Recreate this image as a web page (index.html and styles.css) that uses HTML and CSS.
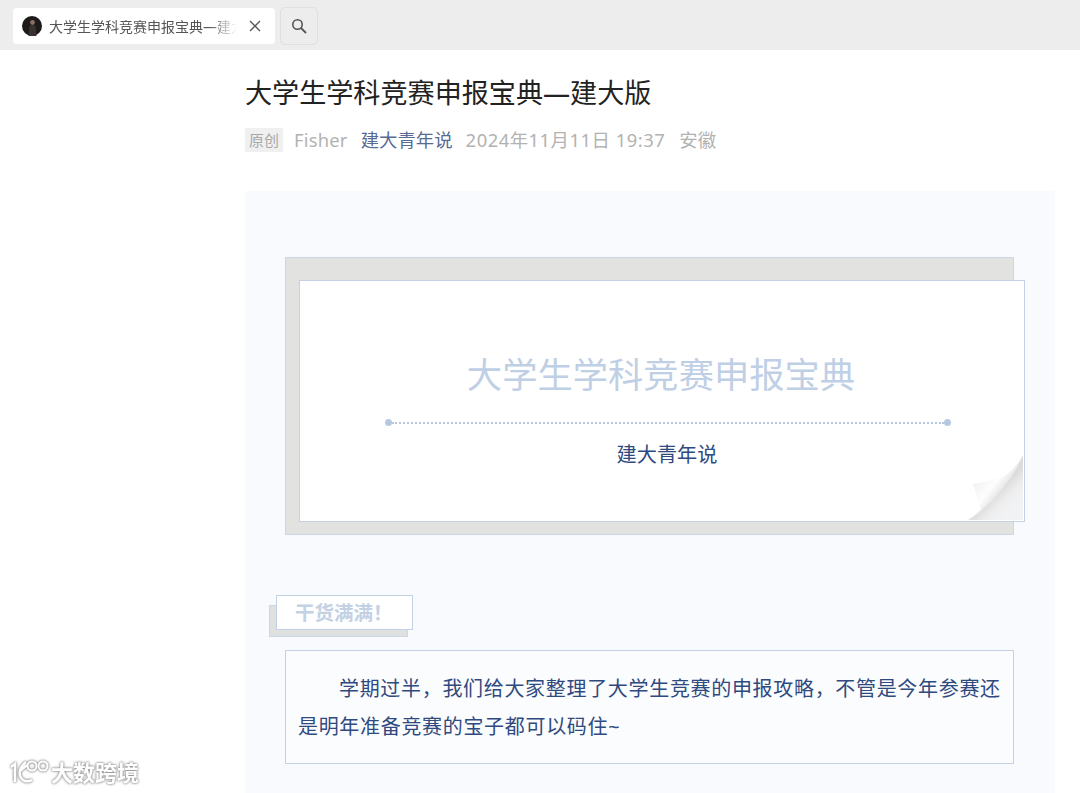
FILE: index.html
```html
<!DOCTYPE html>
<html lang="zh-CN">
    <head>
        <meta charset="UTF-8">
        <title>大学生学科竞赛申报宝典—建大版</title>
        <link rel="stylesheet" href="styles.css">
    </head>
    <body>
        <header class="tab-bar">
            <div class="tab">
                <svg class="tab-avatar" viewBox="0 0 20 20" width="20" height="20">
                    <circle cx="10" cy="10" r="10" fill="#1d1a1a"/>
                    <circle cx="10.5" cy="6.5" r="2.4" fill="#8a6f62"/>
                    <path d="M6.5 20 L7.5 10 Q10.5 8 13.5 10 L14.5 20 Z" fill="#3a3231"/>
                </svg>
                <span class="tab-title">大学生学科竞赛申报宝典—建大版</span>
                <svg class="tab-close" viewBox="0 0 12 12" width="12" height="12">
                    <path d="M1 1 L11 11 M11 1 L1 11" stroke="#555" stroke-width="1.3" fill="none"/>
                </svg>
            </div>
            <button class="search-btn">
                <svg viewBox="0 0 16 16" width="16" height="16">
                    <circle cx="6.5" cy="6.5" r="4.7" stroke="#555" stroke-width="1.6" fill="none"/>
                    <path d="M10 10 L15 15" stroke="#555" stroke-width="1.8" fill="none"/>
                </svg>
            </button>
        </header>

        <main class="article">
            <h1 class="article-title">大学生学科竞赛申报宝典—建大版</h1>
            <div class="meta">
                <span class="meta-tag">原创</span>
                <span class="meta-author">Fisher</span>
                <a class="meta-account" href="#">建大青年说</a>
                <span class="meta-date">2024年11月11日 19:37</span>
                <span class="meta-place">安徽</span>
            </div>

            <section class="content">
                <div class="cover-back">
                    <div class="cover">
                        <h2 class="cover-title">大学生学科竞赛申报宝典</h2>
                        <div class="cover-line">
                            <span class="cover-dot"></span>
                            <span class="cover-dots"></span>
                            <span class="cover-dot"></span>
                        </div>
                        <p class="cover-sub">建大青年说</p>
                        <svg class="cover-curl" viewBox="0 0 58 68" width="58" height="68">
                            <defs>
                                <linearGradient id="foldShade" x1="6" y1="28" x2="34" y2="50" gradientUnits="userSpaceOnUse">
                                    <stop offset="0" stop-color="#f1f1f1"/>
                                    <stop offset="0.5" stop-color="#fdfdfd"/>
                                    <stop offset="0.85" stop-color="#e2e2e2"/>
                                    <stop offset="1" stop-color="#c9c9c9"/>
                                </linearGradient>
                                <linearGradient id="cornerShade" x1="30" y1="38" x2="46" y2="54" gradientUnits="userSpaceOnUse">
                                    <stop offset="0" stop-color="#dcdcdc"/>
                                    <stop offset="0.5" stop-color="#eeeeef"/>
                                    <stop offset="1" stop-color="#f1f2f4"/>
                                </linearGradient>
                            </defs>
                            <path d="M57 0 L57 67 L0 67 Z" fill="#fff"/>
                            <path d="M56 1 L56 66 L1 66 Q38 40 56 1 Z" fill="url(#cornerShade)"/>
                            <path d="M56 1 Q48 15 36 23 Q22 27 6 30 L14 55 L1 67 Q38 40 56 1 Z" fill="url(#foldShade)"/>
                        </svg>
                    </div>
                </div>

                <div class="badge-wrap">
                    <div class="badge">干货满满！</div>
                </div>

                <div class="intro">
                    <p>学期过半，我们给大家整理了大学生竞赛的申报攻略，不管是今年参赛还是明年准备竞赛的宝子都可以码住~</p>
                </div>
            </section>
        </main>

        <div class="watermark">
            <svg viewBox="0 0 42 28" width="42" height="28">
                <path d="M3 10 L7 7 L7 25 M18 5 Q10 12 12 19 Q16 27 24 23 M12 14 L19 8" stroke="#fff" stroke-width="2.4" fill="none"/>
                <circle cx="24" cy="9" r="4.5" stroke="#fff" stroke-width="2" fill="none"/>
                <circle cx="35" cy="9" r="4.5" stroke="#fff" stroke-width="2" fill="none"/>
            </svg>
            <span>大数跨境</span>
        </div>
    </body>
</html>
```

FILE: styles.css
```css
*{
    margin: 0;
    padding: 0;
    box-sizing: border-box;
    font-family: "Noto Sans", "Noto Sans CJK SC", sans-serif;
}

html, body{
    height: 793px;
    overflow: hidden;
    background: #fff;
}

/* Barra de abas */
.tab-bar{
    display: flex;
    align-items: center;
    gap: 6px;
    height: 50px;
    padding: 2px 0 0 13px;
    background: #ededed;
}

.tab{
    display: flex;
    align-items: center;
    width: 262px;
    height: 36px;
    padding: 0 14px 0 9px;
    background: #fff;
    border-radius: 4px;
}

.tab-avatar{
    flex-shrink: 0;
}

.tab-title{
    flex: 1;
    margin-left: 7px;
    padding-top: 2px;
    font-size: 14px;
    line-height: 34px;
    color: #555;
    white-space: nowrap;
    overflow: hidden;
    -webkit-mask-image: linear-gradient(90deg, #000 85%, transparent 100%);
    mask-image: linear-gradient(90deg, #000 85%, transparent 100%);
}

.tab-close{
    flex-shrink: 0;
    margin-left: 12px;
}

.search-btn{
    display: flex;
    align-items: center;
    justify-content: center;
    width: 38px;
    height: 38px;
    margin-left: -1px;
    background: #ededed;
    border: 1px solid #e0e0e0;
    border-radius: 5px;
}

/* Artigo */
.article{
    margin-left: 245px;
    width: 810px;
}

.article-title{
    margin-top: 23px;
    font-size: 27.1px;
    font-weight: 400;
    line-height: 40px;
    color: #222;
}

.meta{
    display: flex;
    align-items: center;
    margin-top: 12px;
    height: 28px;
    font-size: 18.4px;
    color: #b2b2b2;
}

.meta-tag{
    width: 38px;
    height: 24px;
    margin-top: 2px;
    margin-right: 11px;
    font-size: 15px;
    line-height: 24px;
    text-align: center;
    color: #a8a8a8;
    background: #f0f0f0;
}

.meta-author{
    margin-right: 13px;
    letter-spacing: 0.2px;
}

.meta-account{
    margin-right: 13px;
    color: #576b95;
    text-decoration: none;
}

.meta-date{
    margin-right: 14px;
    letter-spacing: 0.5px;
}

.content{
    height: 620px;
    margin-top: 38px;
    padding: 66px 41px 0 40px;
    background: #f9fafe;
}

/* Capa */
.cover-back{
    height: 278px;
    padding: 22px 0 13px 13px;
    background: #e2e2e0;
    border: 1px solid #ccd7e6;
}

.cover{
    position: relative;
    height: 242px;
    margin-right: -12px;
    padding-top: 68px;
    background: #fff;
    border: 1px solid #c3d1e5;
}

.cover-title{
    margin-left: -2px;
    font-size: 35.3px;
    font-weight: 400;
    line-height: 50px;
    text-align: center;
    color: #bfcfe5;
}

.cover-line{
    display: flex;
    align-items: center;
    margin: 20px 73px 0 85px;
}

.cover-dot{
    width: 7px;
    height: 7px;
    border-radius: 50%;
    background: #b7c8e0;
}

.cover-dots{
    flex: 1;
    border-top: 2px dotted #b7c8e0;
}

.cover-sub{
    margin-top: 13px;
    padding-left: 10px;
    font-size: 20.2px;
    line-height: 30px;
    text-align: center;
    color: #2f4a7f;
}

.cover-curl{
    position: absolute;
    right: -1px;
    bottom: -1px;
}

/* Selo */
.badge-wrap{
    width: 139px;
    height: 32px;
    margin: 70px 0 0 -16px;
    background: #dfe0e0;
    border: 1px solid #ccd7e6;
}

.badge{
    position: relative;
    top: -11px;
    left: 6px;
    width: 137px;
    height: 35px;
    font-size: 19.5px;
    font-weight: 700;
    line-height: 33px;
    padding-left: 18px;
    color: #c3d1e5;
    background: #fff;
    border: 1px solid #c3d1e5;
}

/* Texto */
.intro{
    height: 114px;
    margin-top: 13px;
    padding: 19px 12px 0 12px;
    background: #fbfcfe;
    border: 1px solid #c3d1e5;
}

.intro p{
    font-size: 20px;
    line-height: 38px;
    letter-spacing: 0.68px;
    text-indent: 41px;
    color: #2f4a7f;
}

/* Marca d'agua */
.watermark{
    position: absolute;
    left: 8px;
    bottom: 6px;
    display: flex;
    align-items: center;
    gap: 1px;
    font-size: 22px;
    font-weight: 700;
    color: #fff;
    filter: drop-shadow(0 0 1px #888) drop-shadow(0 0 1px #bbb);
}
```
